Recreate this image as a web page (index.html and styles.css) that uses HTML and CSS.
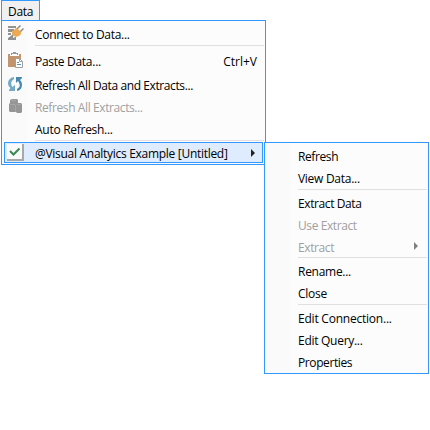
FILE: index.html
```html
<!DOCTYPE html>
<html lang="en">
<head>
<meta charset="utf-8">
<title>Data menu</title>
<link rel="stylesheet" href="styles.css">
</head>
<body>
<div class="tab"><span>Data</span></div>
<div class="menu main">
  <div class="row"><span class="icon"><svg width="16" height="16" viewBox="0 0 16 16"><path fill="#929292" d="M0 1h8v2H0zM0 4h6v3H0zM0 8h3v2H0zM0 15v-2l3-2h2v2l2-1h1v3z"/><path stroke="#8d8d8d" stroke-width="1.500" d="M1 14l5-5M9 4l3.500-3.500M12 7l3.500-3.500"/><path fill="#edaa55" d="M4 6l2-1 2-2 1 0 4 4 0 2-2 2-3 1-2-1-2-2z"/></svg></span><span class="label">Connect to Data...</span></div>
  <hr>
  <div class="row paste"><span class="icon"><svg width="16" height="16" viewBox="0 0 16 16"><path fill="#c1956d" d="M0 2h13v13H0z"/><path fill="#fff" d="M2 1h9v3H2z"/><path fill="#999" d="M3 3V1h2V0h3v1h2v2H9V2H4v1z"/><path fill="#fff" stroke="#a0a0a0" d="M7.500 6.500h4l3 3v6h-7z"/><path fill="none" stroke="#a0a0a0" d="M11.500 6.500v3h3"/><path stroke="#5c93b3" d="M9 10.500h2M9 12.500h4"/></svg></span><span class="label">Paste Data...</span><span class="key">Ctrl+V</span></div>
  <div class="row refresh"><span class="icon"><svg width="15" height="15" viewBox="0 0 15 15"><path fill="#72a9c7" d="M6 0Q0 1 0 6.500q0 3 2.500 4.500L1 13v1h6V8L4.500 10Q1 5 6 2z"/><path fill="#4688b0" d="M9 14q5-1 5-6.500 0-3-2-4.500l2-2V0H8v6l2-2q4 5-1 8z"/></svg></span><span class="label long">Refresh All Data and Extracts...</span></div>
  <div class="row off"><span class="icon stack"><svg width="14" height="14" viewBox="0 0 14 14"><path fill="#969696" d="M1 1l2-1h5l1 1v3h3l1 1v8l-1 1H8l-1-1H1l-1-1V5l1-1z"/><path fill="none" stroke="#a6a6a6" d="M2 1.500h5M1 5.500h5M6.500 6v7M8 5.500h4"/></svg></span><span class="label long">Refresh All Extracts...</span></div>
  <div class="row"><span class="icon"></span><span class="label">Auto Refresh...</span></div>
  <hr>
  <div class="row active"><span class="check"><svg width="12" height="10" viewBox="0 0 12 10"><path fill="none" stroke="#368a52" stroke-width="2" d="M1 4l3.500 3.500L10.500 1.500"/></svg></span><span class="label visual">@Visual Analtyics Example [Untitled]</span><i class="arrow"></i></div>
</div>
<div class="menu sub">
  <div class="row"><span class="label long">Refresh</span></div>
  <div class="row"><span class="label">View Data...</span></div>
  <hr>
  <div class="row"><span class="label long">Extract Data</span></div>
  <div class="row off"><span class="label long">Use Extract</span></div>
  <div class="row off last"><span class="label long">Extract</span><i class="arrow"></i></div>
  <hr>
  <div class="row"><span class="label">Rename...</span></div>
  <div class="row"><span class="label">Close</span></div>
  <hr>
  <div class="row"><span class="label wide">Edit Connection...</span></div>
  <div class="row"><span class="label">Edit Query...</span></div>
  <div class="row"><span class="label long">Properties</span></div>
</div>
</body>
</html>
```
FILE: styles.css
```css
* { box-sizing: border-box; }
body { margin: 0; width: 430px; height: 430px; overflow: hidden; background: #fff; font: 12px/22px "Open Sans", "Noto Sans", sans-serif; letter-spacing: -.28px; color: #000; }
.tab { width: 39px; height: 20px; margin-left: 1px; padding-left: 6px; border: 1px solid #3399ff; border-bottom: 0; background: #f0f0f0; line-height: 21px; }
.menu { border: 1px solid #3399ff; background: linear-gradient(90deg, #fafafa 25px, #fcfcfc 25px); }
.main { width: 265px; height: 145px; margin-left: 1px; padding: 2px 1px 1px 2px; }
.row { display: flex; height: 22px; align-items: center; white-space: nowrap; }
.label, .key { padding-top: 2px; }
.long { letter-spacing: -.4px; }
.wide { letter-spacing: -.22px; }
hr { height: 1px; border: 0; background: #e0e0e0; margin: 0 0 2px 31px; }
.icon { width: 31px; height: 22px; padding-left: 4px; padding-bottom: 2px; display: flex; align-items: center; flex: none; }
.icon svg { flex: none; }
.stack { padding-left: 5px; }
.paste { margin-top: 4px; }
.main > hr:first-of-type { margin-bottom: 0; }
.refresh { margin-top: 2px; }
.key { margin-left: auto; margin-right: 7px; letter-spacing: 0; }
.off { color: #a0a0a0; }
.main hr:nth-of-type(2) { margin-bottom: 1px; }
.active { width: 259px; height: 21px; border: 1px solid #3399ff; background: #deecfd; }
.check { width: 17px; height: 17px; margin-left: 2px; margin-right: 11px; padding: 3px 0 0 2px; line-height: 0; background: #fafafa; border-right: 2px solid #a8a8a8; border-bottom: 2px solid #a8a8a8; flex: none; }
.check svg { display: block; flex: none; }
.visual { letter-spacing: -.29px; }
.arrow { width: 0; height: 0; margin-left: auto; margin-right: 7px; border: 4px solid transparent; border-left-color: #222; border-right: 0; }
.sub { position: absolute; left: 264px; top: 142px; width: 165px; height: 232px; padding: 2px 1px 0 33px; }
.sub hr { margin-left: 0; }
.sub .last { height: 21px; line-height: 23px; }
.sub .off .arrow { margin-right: 9px; margin-bottom: 2px; border-left-color: #808080; }
```
